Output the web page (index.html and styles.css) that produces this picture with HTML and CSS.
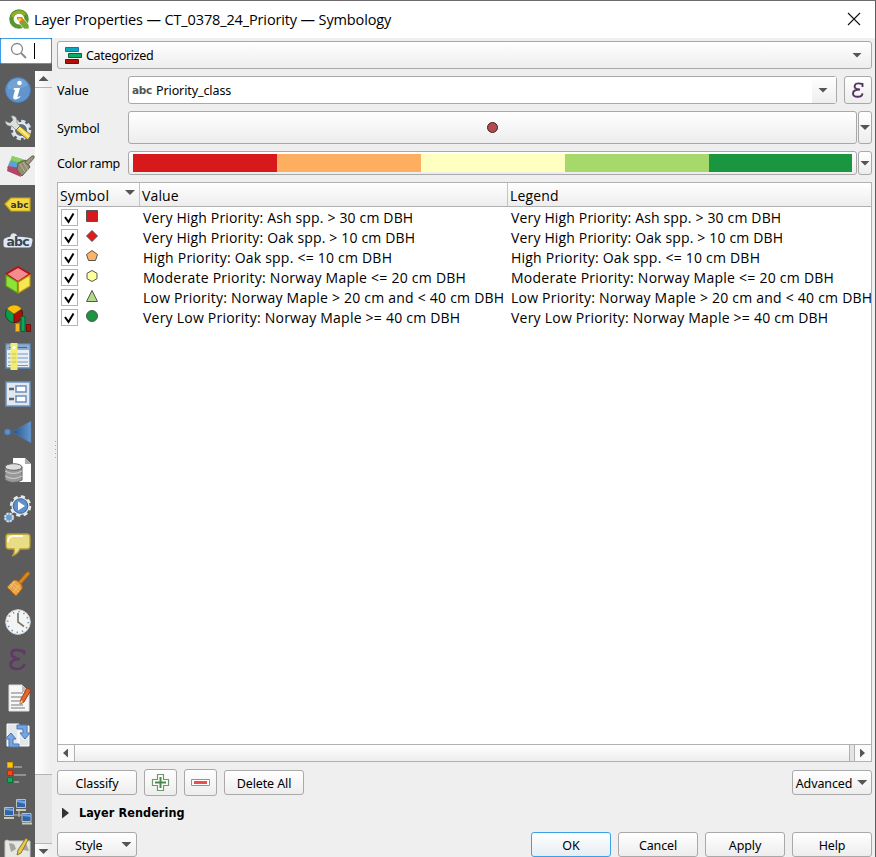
FILE: index.html
```html
<!DOCTYPE html>
<html lang="en">
<head>
<meta charset="utf-8">
<title>Layer Properties</title>
<link rel="stylesheet" href="styles.css">
</head>
<body>
<div class="window">
<header class="titlebar">
  <svg class="logo" width="22" height="22" viewBox="0 0 22 22"><circle cx="10" cy="10" r="7.6" fill="none" stroke="#589632" stroke-width="4.4"/><path d="M3 8a7.5 7.5 0 0 1 13-2" fill="none" stroke="#93b023" stroke-width="3"/><path d="M10 10h5l5 6v4h-5l-5-6z" fill="#76a832" stroke="#fff" stroke-width=".7"/><path d="M8 8h5l2 3-3 3-4-4z" fill="#ee7913"/><path d="M9 9l4 1-3 3z" fill="#f0e64a"/></svg>
  <span class="title">Layer Properties — CT_0378_24_Priority — Symbology</span>
  <svg class="close" width="14" height="14" viewBox="0 0 14 14"><path d="M1 1l12 12M13 1L1 13" stroke="#111" stroke-width="1.1"/></svg>
</header>
<div class="body">
<aside class="side">
  <div class="search"><svg width="20" height="20" viewBox="0 0 20 20"><circle cx="7" cy="8" r="5.500" fill="none" stroke="#888" stroke-width="1.3"/><path d="M11 12l5 5" stroke="#888" stroke-width="1.800"/></svg><i class="caret"></i></div>
  <div class="sidelist">
    <nav class="tabs">
      <svg viewBox="0 0 35 38"><circle cx="18" cy="19" r="12.5" fill="#6295ce" stroke="#4b7db9"/><path d="M8 14a11 11 0 0 1 20 0q-6 5-20 4z" fill="#7eabdb" opacity=".6"/><circle cx="19.5" cy="12" r="2.3" fill="#fff"/><path d="M14 17h6l-2.5 8.5q0 1.5 2.5-.5l.5.8q-3 3-5.5 2.6-2.5-.5-1.6-3.6l1.6-5.6-1.5-.5z" fill="#fff"/></svg>
      <svg viewBox="0 0 35 38"><circle cx="21" cy="21" r="8.300" fill="none" stroke="#d3dcea" stroke-width="4" stroke-dasharray="4 2.5"/><circle cx="21" cy="21" r="7" fill="#5d6d80" stroke="#e4e9f0" stroke-width="2"/><path d="M5 12l5 2 3-3-2-4q5-1 6 4v3l4 4-4 4-5-5q-6 1-7-5z" fill="#dcdfdf" stroke="#777" stroke-width=".6"/><path d="M16 21l4-4 11 9-3 5z" fill="#ecd24c" stroke="#6b5c20" stroke-width=".8"/><path d="M19 19l10 9" stroke="#fff3a0" stroke-width="1.5"/></svg>
      <svg class="on" viewBox="0 0 35 38"><path d="M12 9l13 4-3 13-14-5z" fill="#72b352"/><path d="M10 14l12 3-2 8-13-4z" fill="#57a5d6"/><path d="M8 19l12 2 1 9-14-6z" fill="#b54469"/><path d="M12 9l10 3-3 4-8-3z" fill="#8bd062"/><path d="M18 16l8-3 4 7-8 9-5-6z" fill="#938e70" stroke="#615d48"/><path d="M20 17l5 8M23 15l5 8" stroke="#c5bea0" stroke-width=".8"/><path d="M25 15l7-6q3-1 2 2l-6 7z" fill="#9b957c" stroke="#696552"/></svg>
      <svg viewBox="0 0 35 38"><path d="M5 19l6-6h19v13H11z" fill="#f5d73f" stroke="#c6a51d" stroke-width="1.2"/><text x="10.500" y="22.500" class="abc1" textLength="18">abc</text></svg>
      <svg viewBox="0 0 35 38"><path d="M6 22V17.500q3-2 7-1V13q2-1 2 3 9 0 15 1.500l-1 4.500z" fill="#dfe7f5" stroke="#dfe7f5" stroke-width="5" stroke-linejoin="round"/><text x="6.500" y="23" class="abc2" textLength="23">abc</text></svg>
      <svg viewBox="0 0 35 38"><path d="M6 13l12-7 12 7-12 8z" fill="#f48b8d" stroke="#b90e16" stroke-width="1.6"/><path d="M6 14l11.5 7v11L6 25z" fill="#8de337" stroke="#5d9b15" stroke-width="1.2"/><path d="M30 14l-11.5 7v11L30 25z" fill="#f9e653" stroke="#b89a10" stroke-width="1.2"/></svg>
      <svg viewBox="0 0 35 38"><circle cx="14" cy="15" r="8.5" fill="#0b9b4c" stroke="#104f28"/><path d="M14 15V23.500A8.500 8.500 0 0 0 21.500 11z" fill="#b10e0a" stroke="#610"/><path d="M14 15L7 10a8.500 8.500 0 0 1 14.500 0z" fill="#f8c112" stroke="#7a5a00" stroke-width=".7"/><path d="M15.500 24.500h4v8h-4z" fill="#f5b522" stroke="#b98008"/><path d="M21 17.500h4v15h-4z" fill="#10a35a" stroke="#04642f"/><path d="M26.500 25.500h4v7h-4z" fill="#a4160f" stroke="#710c08"/></svg>
      <svg viewBox="0 0 35 38"><path d="M6 7h24v24H6z" fill="#e9eef4" stroke="#5f87b6" stroke-width="1.5"/><path d="M7 8h22v5H7z" fill="#8ab0da"/><path d="M8 17h20M8 21h20M8 25h20M8 28.500h20" stroke="#7397c2" stroke-width="1.200"/><path d="M9 10.500h18" stroke="#496d9b" stroke-width="1.2"/><path d="M10.500 6h7v27h-7z" fill="#f2ed72"/><path d="M12 17h4M12 21h4M12 25h4" stroke="#c5bf70"/><circle cx="14" cy="10.500" r="1.5" fill="#fff"/></svg>
      <svg viewBox="0 0 35 38"><path d="M6 7h24v24H6z" fill="#e3e8ee" stroke="#6b91be" stroke-width="1.5"/><path d="M16 11h10v6H16zM16 21h10v6H16z" fill="#fff" stroke="#6a90be" stroke-width="1.5"/><path d="M9 14h5M9 24h5" stroke="#536475" stroke-width="2.5"/></svg>
      <svg viewBox="0 0 35 38"><defs><linearGradient id="tri"><stop stop-color="#224f83"/><stop offset="1" stop-color="#6598d0"/></linearGradient></defs><path d="M12 19L31 8v22z" fill="url(#tri)" stroke="#4d77a7" stroke-width=".6"/><circle cx="7.500" cy="19" r="3" fill="#638fc2" stroke="#4377b3"/></svg>
      <svg viewBox="0 0 35 38"><path d="M13 7h12l6 6v18H13z" fill="#fff"/><path d="M25 7v6h6z" fill="#aaa"/><path d="M5 16v13q8 5 17 0V16z" fill="#999" stroke="#626262"/><ellipse cx="13.500" cy="16" rx="8.500" ry="3.300" fill="#ddd" stroke="#666"/><path d="M5 20q8 5 17 0M5 25q8 5 17 0" fill="none" stroke="#d0d0d0" stroke-width="1"/></svg>
      <svg viewBox="0 0 35 38"><circle cx="20.500" cy="17" r="9" fill="#e7e9eb" stroke="#e7e9eb" stroke-width="3.500" stroke-dasharray="4 3.070"/><circle cx="20.500" cy="17" r="7.300" fill="#5b91cf" stroke="#39648f"/><path d="M18 12.500l7 4.500-7 4.500z" fill="#fff"/><circle cx="9" cy="28.500" r="4" fill="#679dd6" stroke="#dbe0e4" stroke-width="2" stroke-dasharray="2.300 .840"/></svg>
      <svg viewBox="0 0 35 38"><path d="M9 7h18q3 0 3 3v9q0 3-3 3h-7q-2 5-8 7 3-3 2-7H9q-3 0-3-3V10q0-3 3-3z" fill="#e8dc84" stroke="#b59b30" stroke-width="1.300"/><path d="M8 15q0-6 6-6h9" fill="none" stroke="#fffbe0" stroke-width="1.800"/></svg>
      <svg viewBox="0 0 35 38"><path d="M18 17l9-10q3-1 3 2l-9 10z" fill="#d78624" stroke="#ab610b"/><path d="M14 15q3 0 6 3t2 6l-6 7-9-9z" fill="#e9a344" stroke="#b56b10"/><path d="M10 19l9 8M12 17l8 7M9 24l6-8M13 28l6-8" stroke="#f6cb87" stroke-width=".700"/></svg>
      <svg viewBox="0 0 35 38"><circle cx="18" cy="19" r="12.300" fill="#f4f4f2" stroke="#d5d5d5"/><circle cx="18" cy="19" r="10.300" fill="none" stroke="#6491c4" stroke-width="1.600" stroke-dasharray="1.300 4.090"/><path d="M18 10v9l6 4.500" fill="none" stroke="#777" stroke-width="1.700"/></svg>
      <svg viewBox="0 0 35 38"><path d="M24 13.500V10.500Q14 7 12 11q-2 6 8 7-9 0-9.500 5.500Q11 28 17 28q6 0 7.500-5" fill="none" stroke="#603766" stroke-width="2.600"/></svg>
      <svg viewBox="0 0 35 38"><path d="M9 6h13l7 7v19H9z" fill="#f7f7f7" stroke="#ddd"/><path d="M22 6v7h7z" fill="#bbb"/><path d="M11 14h12M11 18h13M11 22h10M11 26h12M11 29h14" stroke="#a2a2a2" stroke-width="1.300"/><path d="M27 9l4 2-7 12-4 2 1-5z" fill="#df6730" stroke="#a43d13"/><path d="M20 25l1-4 2 2z" fill="#f5d5a5"/></svg>
      <svg viewBox="0 0 35 38"><path d="M7 7h12v22H7zM18 9h11v20H18z" fill="#e3e6eb" stroke="#fff"/><path d="M17 8h10v8h3l-5 6-5-6h3v-4h-6z" fill="#78a5df" stroke="#4478b8"/><path d="M5 22l6-6 5 6h-3v5h6v3H9v-8z" fill="#78a5df" stroke="#4478b8"/></svg>
      <svg viewBox="0 0 35 38"><path d="M7.500 7.500h5v5h-5z" fill="#ffc414" stroke="#df9c00"/><path d="M7.500 15.500h5v5h-5z" fill="#f64b19" stroke="#bc2c08"/><path d="M7.500 22.500h5v5h-5z" fill="#12ac59" stroke="#087439"/><path d="M14 12h8M14 20h12M14 27h5" stroke="#919191" stroke-width="2"/></svg>
      <svg viewBox="0 0 35 38"><path d="M19 16v8M14 22h11" stroke="#bbb" stroke-width="1.200"/><path d="M16.500 6.500h9v8h-9zM4.500 14.500h9v8h-9zM22 20.500h9v8h-9z" fill="#2e66a9" stroke="#b8bfbe"/><path d="M17 7l8 1v3l-8-2zM5 15l8 1v2l-8-1zM23 21l8 1v2l-8-1z" fill="#73a2dd"/><path d="M16 17h10M4 25h10M22 30.500h10" stroke="#c9c9b8" stroke-width="2"/></svg>
      <svg viewBox="0 0 35 38"><path d="M5 10q2-2 4 0h21v20H5z" fill="#e7e7e4" stroke="#c8c8c5"/><path d="M9 12l5 1 2 5-5 3zM20 15l6-3 3 8-6-1z" fill="#a4a4a0"/><path d="M26 7l2 2-7 13-4 2 1-5z" fill="#e9ca4a" stroke="#8c7a30"/></svg>
    </nav>
    <div class="vbar"><i class="arrow up"></i><span class="vthumb"></span><span class="vtrack"></span><i class="arrow"></i></div>
  </div>
</aside>
<i class="grip"></i>
<main class="main">
  <div class="btn renderer"><svg width="18" height="19" viewBox="0 0 18 19"><path d="M1.500 1.500h13v4h-13z" fill="#09a9ba" stroke="#2465bd"/><path d="M4.500 7.500h13v4h-13z" fill="#0aae60" stroke="#08622f"/><path d="M1.500 13.500h13v4h-13z" fill="#b20e06" stroke="#7b0905"/></svg><span class="t-cat">Categorized</span><i class="arrow end"></i></div>
  <div class="row r-value"><label>Value</label><div class="combo"><b>abc</b><span class="t-pri">Priority_class</span><div class="drop"><i class="arrow"></i></div></div><div class="btn eps"><svg width="14" height="18" viewBox="0 0 14 18"><path d="M11.500 6V3Q5 1.500 4 4q-2 4 5 4.500-7 0-7 4 0 3.500 5 3.300 4 0 4.500-3.500" fill="none" stroke="#56335f" stroke-width="1.900"/></svg></div></div>
  <div class="row r-symbol"><label>Symbol</label><div class="btn grow"><i class="dot"></i></div><div class="btn thin"><i class="arrow"></i></div></div>
  <div class="row r-ramp"><label class="t-ramp">Color ramp</label><div class="btn grow ramp"><i class="c1"></i><i class="c2"></i><i class="c3"></i><i class="c4"></i><i class="c5"></i></div><div class="btn thin"><i class="arrow"></i></div></div>
  <section class="table">
    <div class="tr head"><div><span>Symbol</span><i class="arrow"></i></div><div><span>Value</span></div><div><span>Legend</span></div></div>
    <div class="rows">
      <div class="tr w1"><div><i class="check"><svg viewBox="0 0 15 15"><path d="M3 7l3.500 5L11.500 3.500"/></svg></i><svg class="sym" viewBox="0 0 14 14"><path d="M1.500 1.500h11v11h-11z" fill="#d7191c"/></svg></div><div><span>Very High Priority: Ash spp. &gt; 30 cm DBH</span></div><div><span>Very High Priority: Ash spp. &gt; 30 cm DBH</span></div></div>
      <div class="tr w1"><div><i class="check"><svg viewBox="0 0 15 15"><path d="M3 7l3.500 5L11.500 3.500"/></svg></i><svg class="sym" viewBox="0 0 14 14"><path d="M7 1.500l5.500 5.500L7 12.500 1.500 7z" fill="#e31a1c"/></svg></div><div><span>Very High Priority: Oak spp. &gt; 10 cm DBH</span></div><div><span>Very High Priority: Oak spp. &gt; 10 cm DBH</span></div></div>
      <div class="tr w3"><div><i class="check"><svg viewBox="0 0 15 15"><path d="M3 7l3.500 5L11.500 3.500"/></svg></i><svg class="sym" viewBox="0 0 14 14"><path d="M7 1.500L12.500 5.500l-2 6h-7l-2-6z" fill="#fdb366"/></svg></div><div><span>High Priority: Oak spp. &lt;= 10 cm DBH</span></div><div><span>High Priority: Oak spp. &lt;= 10 cm DBH</span></div></div>
      <div class="tr w4"><div><i class="check"><svg viewBox="0 0 15 15"><path d="M3 7l3.500 5L11.500 3.500"/></svg></i><svg class="sym" viewBox="0 0 14 14"><path d="M7 1.500l5 2.800v5.400l-5 2.800-5-2.800V4.300z" fill="#ffff99"/></svg></div><div><span>Moderate Priority: Norway Maple &lt;= 20 cm DBH</span></div><div><span>Moderate Priority: Norway Maple &lt;= 20 cm DBH</span></div></div>
      <div class="tr w5"><div><i class="check"><svg viewBox="0 0 15 15"><path d="M3 7l3.500 5L11.500 3.500"/></svg></i><svg class="sym" viewBox="0 0 14 14"><path d="M7 1.500l5.500 11h-11z" fill="#aedb83"/></svg></div><div><span>Low Priority: Norway Maple &gt; 20 cm and &lt; 40 cm DBH</span></div><div><span>Low Priority: Norway Maple &gt; 20 cm and &lt; 40 cm DBH</span></div></div>
      <div class="tr w5"><div><i class="check"><svg viewBox="0 0 15 15"><path d="M3 7l3.500 5L11.500 3.500"/></svg></i><svg class="sym" viewBox="0 0 14 14"><circle cx="7" cy="7" r="5.500" fill="#1a9641"/></svg></div><div><span>Very Low Priority: Norway Maple &gt;= 40 cm DBH</span></div><div><span>Very Low Priority: Norway Maple &gt;= 40 cm DBH</span></div></div>
    </div>
    <div class="hbar"><i class="arrow left"></i><span class="hthumb"></span><span class="htrack"></span><i class="arrow right"></i></div>
  </section>
  <div class="actions"><div class="btn wide">Classify</div><div class="btn icon"><svg width="20" height="20" viewBox="0 0 20 20"><path d="M6.500 1.500h6v5h5v6h-5v5h-6v-5h-5v-6h5z" fill="#fff" stroke="#659d68" stroke-width="1.200"/><path d="M9.500 4v11M4 9.500h11" stroke="#4b8850" stroke-width="2"/></svg></div><div class="btn icon"><svg width="20" height="20" viewBox="0 0 20 20"><path d="M.500 6.500h18v6H.500z" fill="#fff" stroke="#ef6b6b"/><path d="M3 9.500h13" stroke="#ee4d4d" stroke-width="3"/></svg></div><div class="btn wide">Delete All</div><div class="btn wide adv"><span>Advanced</span><i class="arrow"></i></div></div>
  <div class="group"><i class="arrow right"></i><span>Layer Rendering</span></div>
  <div class="footer"><div class="btn wide style"><span>Style</span><i class="arrow"></i></div><div class="btn wide ok">OK</div><div class="btn wide">Cancel</div><div class="btn wide">Apply</div><div class="btn wide">Help</div></div>
</main>
</div>
</div>
</body>
</html>
```
FILE: styles.css
```css
* { box-sizing: border-box; }
body { margin: 0; overflow: hidden; font: 12.5px/16px "Noto Sans", "Open Sans", sans-serif; letter-spacing: -.12px; color: #000; }
.window { width: 876px; height: 857px; background: #efefef; border-top: 1px solid #6b696b; border-right: 1px solid #5c5c5c; overflow: hidden; white-space: nowrap; }
.titlebar { height: 37px; background: #fff; display: flex; align-items: center; padding: 0 14px 0 9px; }
.title { font: 14.5px/20px "Open Sans", sans-serif; margin-left: 3px; letter-spacing: -.13px; }
.close { margin: -2px 0 0 auto; }
.body { display: flex; height: 819px; }
.side { width: 52px; background: #5c5c5c; flex: none; }
.search { height: 26px; border: 1.5px solid #3ba0ec; background: #fff; display: flex; align-items: center; padding-left: 9px; border-radius: 2px; }
.caret { width: 1px; height: 16px; background: #000; margin-left: 4px; }
.sidelist { display: flex; height: 786px; margin-top: 7px; }
.tabs { width: 35px; height: 786px; overflow: hidden; }
.tabs svg { width: 35px; height: 38px; display: block; }
.tabs .on { background: #efefef; }
.abc1 { font: bold 9px "DejaVu Sans", sans-serif; fill: #333; }
.abc2 { font: bold 12.5px "DejaVu Sans", sans-serif; fill: #3c4450; }
.vbar { width: 17px; background: linear-gradient(90deg, #fff, #ededed); display: flex; flex-direction: column; align-items: center; padding: 5px 0; }
.vthumb { width: 17px; height: 688px; margin-top: 6px; border: 1px solid #b5b5b5; border-left: 0; border-right: 0; flex: none; }
.vtrack { width: 17px; height: 69px; background: #e4e4e4; border-bottom: 1px solid #b5b5b5; margin-bottom: 5px; flex: none; }
.arrow { display: block; width: 10px; height: 5px; background: #555; clip-path: polygon(0 0, 100% 0, 50% 100%); flex: none; }
.arrow.up { clip-path: polygon(0 100%, 100% 100%, 50% 0); }
.arrow.left { width: 5px; height: 9px; clip-path: polygon(100% 0, 100% 100%, 0 50%); }
.arrow.right { width: 5px; height: 9px; clip-path: polygon(0 0, 100% 50%, 0 100%); }
.grip { width: 1px; height: 18px; margin: 403px 1px 0 3px; background: repeating-linear-gradient(#aaa 0 1px, transparent 1px 4px); flex: none; }
.main { width: 815px; padding-top: 3px; flex: none; }
.btn { border: 1px solid #a9a9a9; border-radius: 3px; background: linear-gradient(#fff, #ededed); display: flex; align-items: center; justify-content: center; }
.renderer { height: 28px; justify-content: flex-start; padding: 0 9px 0 6px; }
.t-cat { margin-left: 4px; padding-top: 2px; letter-spacing: -.3px; }
.end { margin-left: auto; }
.row { display: flex; align-items: center; }
.row label { width: 71px; flex: none; padding-top: 2px; }
.row .t-ramp { letter-spacing: -.3px; }
.r-value { height: 28px; margin-top: 7px; }
.combo { width: 709px; height: 28px; border: 1px solid #a9a9a9; border-radius: 3px; background: #fff; display: flex; align-items: center; padding-left: 3px; }
.combo b { font: bold 10.5px/14px "DejaVu Sans", sans-serif; color: #555; width: 24px; letter-spacing: -.3px; }
.t-pri { padding-top: 2px; letter-spacing: -.1px; }
.drop { margin-left: auto; width: 24px; height: 26px; background: linear-gradient(#fff, #eee); display: flex; align-items: center; padding-left: 6px; }
.eps { width: 28px; height: 28px; margin-left: 7px; }
.r-symbol { height: 33px; margin-top: 7px; }
.r-symbol .btn { height: 33px; }
.grow { width: 729px; }
.thin { width: 14px; margin-left: 1px; }
.dot { width: 11px; height: 11px; border-radius: 50%; background: #b7484b; border: 1px solid #3c2526; margin: -1px 1px 0 0; }
.r-ramp { height: 24px; margin-top: 7px; }
.r-ramp .btn { height: 24px; }
.ramp i { width: 144px; height: 18px; }
.ramp .c5 { width: 143px; }
.c1 { background: #d7191c; } .c2 { background: #fdae61; } .c3 { background: #ffffc0; } .c4 { background: #a6d96a; } .c5 { background: #1a9641; }
.table { height: 580px; margin-top: 7px; border: 1px solid #b1b1b1; background: #fff; font: 14px/20px "Open Sans", sans-serif; letter-spacing: 0; }
.tr { display: grid; grid-template-columns: 82px 368px 363px; height: 20px; }
.tr > div { display: flex; align-items: center; overflow: hidden; padding-left: 3px; }
.w1 { letter-spacing: .16px; }
.w3 { letter-spacing: .22px; }
.w4 { letter-spacing: .25px; }
.w5 { letter-spacing: .225px; }
.head { height: 24px; background: linear-gradient(#fff, #ededed); border-bottom: 1px solid #b1b1b1; letter-spacing: .15px; }
.head > div { border-right: 1px solid #c4c4c4; padding-left: 2px; }
.head > div:last-child { border: 0; }
.head span { padding-top: 2px; }
.head .arrow { margin: -4px 4px 0 auto; }
.rows { height: 537px; padding-top: 1px; }
.check { width: 17px; height: 17px; border: 1px solid #b5b5b5; background: #fff; margin-top: -1px; }
.check svg { display: block; width: 15px; height: 15px; }
.check path { fill: none; stroke: #000; stroke-width: 2; }
.sym { width: 14px; height: 14px; margin: -4px 0 0 6.5px; stroke: #555; stroke-width: 1; }
.hbar { height: 17px; border-top: 1px solid #b1b1b1; display: flex; align-items: center; background: #fafafa; }
.hbar .left { margin: 0 6px 0 5px; }
.hthumb { width: 776px; height: 16px; border: 1px solid #b1b1b1; border-top: 0; border-bottom: 0; background: linear-gradient(#fff, #ededed); }
.htrack { width: 5px; height: 16px; background: #e4e4e4; border-right: 1px solid #b1b1b1; }
.hbar .right { margin-left: 5px; }
.actions { display: flex; align-items: center; height: 27px; margin-top: 7px; gap: 7px; }
.wide { width: 80px; height: 25px; padding-top: 2px; }
.icon { width: 33px; height: 27px; }
.adv { margin-left: auto; gap: 5px; padding-right: 1px; }
.adv .arrow { margin-top: -2px; }
.group { height: 18px; margin-top: 8px; display: flex; align-items: center; padding-left: 5px; font: bold 12.5px/18px "DejaVu Sans Condensed", "DejaVu Sans", sans-serif; letter-spacing: .1px; }
.group .arrow { width: 7px; height: 11px; background: #333; margin-right: 10px; }
.footer { display: flex; gap: 7px; margin-top: 10px; }
.footer .btn { height: 25px; padding-top: 3px; }
.footer .style { margin-right: auto; justify-content: flex-start; padding-left: 17px; }
.style .arrow { margin-left: 19px; margin-top: -3px; }
.footer .ok { border-color: #3ba0ec; background: linear-gradient(#fff, #e6edf3); }
```
